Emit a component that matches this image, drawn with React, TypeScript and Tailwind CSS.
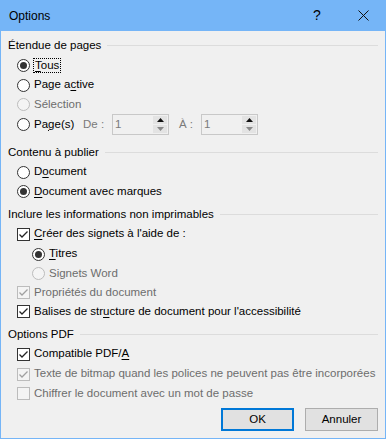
import React from 'react';

const font = "font-['Liberation_Sans',Arial,sans-serif]";

const Radio = ({ checked = false, disabled = false }: { checked?: boolean; disabled?: boolean }) => (
  <span
    className={`flex h-[13px] w-[13px] shrink-0 items-center justify-center rounded-full border ${
      disabled ? 'border-[#bcbcbc] bg-[#f4f4f4]' : 'border-[#333] bg-white'
    }`}
  >
    {checked && <span className="h-[7px] w-[7px] rounded-full bg-[#333]" />}
  </span>
);

const Check = ({ checked = false, disabled = false }: { checked?: boolean; disabled?: boolean }) => (
  <span
    className={`flex h-[13px] w-[13px] shrink-0 items-center justify-center border ${
      disabled ? 'border-[#bcbcbc] bg-[#f4f4f4]' : 'border-[#333] bg-white'
    }`}
  >
    {checked && (
      <svg width="11" height="11" viewBox="0 0 11 11">
        <path d="M1.5 5.5 L4 8 L9.5 2.5" fill="none" stroke={disabled ? '#a0a0a0' : '#222'} strokeWidth="1.3" />
      </svg>
    )}
  </span>
);

const U = ({ children }: { children: React.ReactNode }) => <span className="underline underline-offset-2">{children}</span>;

const Header = ({ title, className = '' }: { title: string; className?: string }) => (
  <div className={`flex h-[19px] items-center gap-[6px] pl-[7px] pr-[7px] ${className}`}>
    <span className="whitespace-nowrap">{title}</span>
    <span className="h-px flex-1 bg-[#dcdcdc]" />
  </div>
);

const Row = ({
  control,
  children,
  disabled = false,
  indent = false,
  h = 'h-[20px]',
}: {
  control: React.ReactNode;
  children: React.ReactNode;
  disabled?: boolean;
  indent?: boolean;
  h?: string;
}) => (
  <div className={`flex ${h} items-center gap-[4px] ${indent ? 'pl-[31px]' : 'pl-[16px]'} ${disabled ? 'text-[#6d6d6d]' : 'text-black'}`}>
    {control}
    <span className="whitespace-nowrap">{children}</span>
  </div>
);

const Spin = ({ w }: { w: string }) => (
  <div className={`flex h-[21px] ${w} items-stretch border border-[#c8c8c8] bg-[#f0f0f0]`}>
    <span className="flex-1 pl-[2px] leading-[19px] text-[#7a7a7a]">1</span>
    <div className="flex w-[15px] flex-col gap-px py-px pr-px">
      <span className="flex flex-1 items-center justify-center bg-[#e3e3e3]">
        <svg width="7" height="4" viewBox="0 0 7 4"><path d="M0 4 L3.5 0 L7 4Z" fill="#111" /></svg>
      </span>
      <span className="flex flex-1 items-center justify-center bg-[#e3e3e3]">
        <svg width="7" height="4" viewBox="0 0 7 4"><path d="M0 0 L3.5 4 L7 0Z" fill="#888" /></svg>
      </span>
    </div>
  </div>
);

export default function App() {
  return (
    <div className={`flex h-[439px] w-[386px] flex-col border border-t-0 border-[#75b5f7] bg-[#f0f0f0] text-[11.5px] text-black ${font}`}>
      <div className="-mx-px flex h-[31px] shrink-0 items-center bg-[#75b5f7] pl-[9px] text-[12px]">
        <span className="flex-1">Options</span>
        <span className="w-[46px] text-center text-[14px]">?</span>
        <span className="flex w-[46px] justify-center">
          <svg width="11" height="11" viewBox="0 0 11 11">
            <path d="M0.5 0.5 L10.5 10.5 M10.5 0.5 L0.5 10.5" stroke="#111" strokeWidth="1" />
          </svg>
        </span>
      </div>

      <div className="flex flex-1 flex-col pt-[5px]">
        <Header title="Étendue de pages" />
        <div className="flex h-[20px] items-center gap-[3px] pl-[16px]">
          <Radio checked />
          <span className="border border-dotted border-black px-[1px] leading-[13px]">
            <U>T</U>ous
          </span>
        </div>
        <Row control={<Radio />}>
          Page a<U>c</U>tive
        </Row>
        <Row control={<Radio disabled />} disabled h="h-[19px]">
          Sélection
        </Row>
        <div className="flex h-[21px] items-center pl-[16px]">
          <Radio />
          <span className="ml-[4px] w-[49px]">
            Pa<U>g</U>e(s)
          </span>
          <span className="w-[29px] text-[#7a7a7a]">De :</span>
          <Spin w="w-[57px]" />
          <span className="ml-[10px] w-[22px] text-[#7a7a7a]">À :</span>
          <Spin w="w-[57px]" />
        </div>

        <Header title="Contenu à publier" className="mt-[8px]" />
        <Row control={<Radio />}>
          D<U>o</U>cument
        </Row>
        <Row control={<Radio checked />} h="h-[19px]">
          <U>D</U>ocument avec marques
        </Row>

        <Header title="Inclure les informations non imprimables" className="mt-[4px]" />
        <Row control={<Check checked />}>
          <U>C</U>réer des signets à l'aide de :
        </Row>
        <Row control={<Radio checked />} indent>
          <U>T</U>itres
        </Row>
        <Row control={<Radio disabled />} indent disabled h="h-[19px]">
          Signets Word
        </Row>
        <Row control={<Check checked disabled />} disabled h="h-[19px]">
          Propriétés du document
        </Row>
        <Row control={<Check checked />} h="h-[19px]">
          Balises de str<U>u</U>cture de document pour l'accessibilité
        </Row>

        <Header title="Options PDF" className="mt-[4px]" />
        <Row control={<Check checked />}>
          Compatible PDF/<U>A</U>
        </Row>
        <Row control={<Check checked disabled />} disabled>
          Texte de bitmap quand les polices ne peuvent pas être incorporées
        </Row>
        <Row control={<Check disabled />} disabled h="h-[19px]">
          Chiffrer le document avec un mot de passe
        </Row>

        <div className="mt-[5px] flex justify-end gap-[11px] pr-[7px]">
          <button className="h-[23px] w-[73px] border-2 border-[#0078d7] bg-[#e1e1e1]">OK</button>
          <button className="h-[23px] w-[73px] border border-[#adadad] bg-[#e1e1e1]">Annuler</button>
        </div>
      </div>
    </div>
  );
}
